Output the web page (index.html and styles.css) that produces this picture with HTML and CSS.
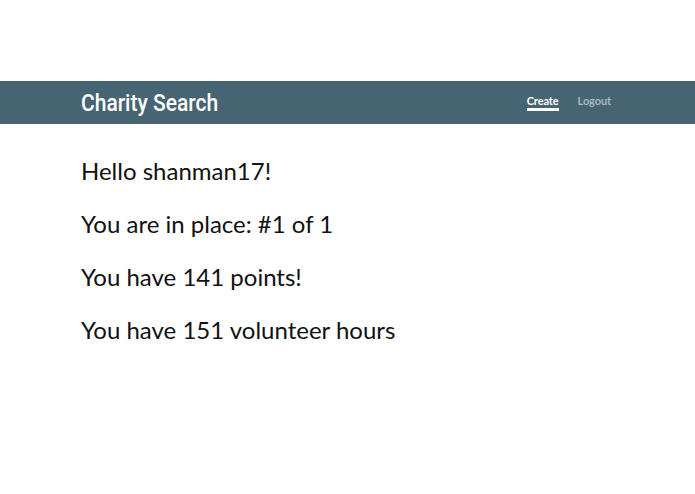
FILE: index.html
```html
<!DOCTYPE html>
<html>
<head>
<meta charset="utf-8">
<link rel="stylesheet" href="styles.css">
</head>
<body>
<div class="top"></div>
<header class="navbar">
  <div class="brand">Charity Search</div>
  <nav class="links">
    <a class="link active" href="#">Create</a>
    <a class="link" href="#">Logout</a>
  </nav>
</header>
<main class="content">
  <p class="line">Hello shanman17!</p>
  <p class="line">You are in place: #1 of 1</p>
  <p class="line">You have 141 points!</p>
  <p class="line">You have 151 volunteer hours</p>
</main>
</body>
</html>
```
FILE: styles.css
```css
html, body { margin: 0; padding: 0; background: #fff; }
body { font-family: Lato, "Open Sans", sans-serif; color: #111; }
.top { height: 81px; }
.navbar {
  height: 43px;
  background: #476473;
  display: flex;
  align-items: center;
  justify-content: space-between;
  padding: 0 84px 0 81px;
}
.brand {
  font-family: Roboto, sans-serif;
  font-weight: 500;
  font-size: 24px;
  color: #fff;
  transform: scaleX(0.875);
  transform-origin: left center;
}
.links { display: flex; gap: 19px; }
.link {
  font-family: Lato, sans-serif;
  font-size: 11px;
  font-weight: 700;
  color: #a9b8c0;
  text-decoration: none;
  padding-bottom: 1px;
  letter-spacing: -0.1px;
}
.link.active { color: #fff; border-bottom: 3px solid #fff; }
.content { padding: 32px 81px; }
.line { margin: 0 0 24px; font-size: 24px; line-height: 29px; }
```
